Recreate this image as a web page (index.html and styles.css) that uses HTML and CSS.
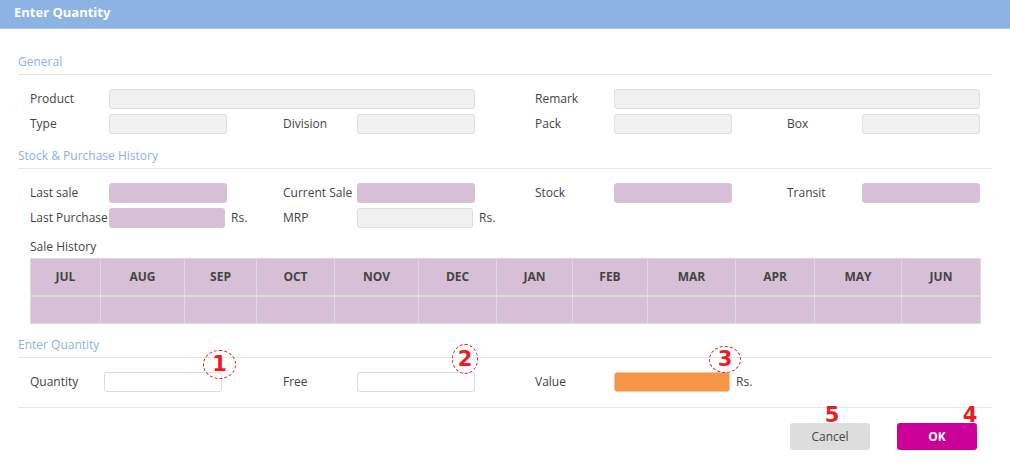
FILE: index.html
```html
<!DOCTYPE html>
<html>
<head>
<meta charset="utf-8">
<link rel="stylesheet" href="styles.css">
</head>
<body>
<div class="dialog">
  <div class="header">Enter Quantity</div>
  <div class="content">
    <div class="section-title first">General</div>
    <div class="form-grid">
      <span class="lbl">Product</span>
      <span class="inp gray span4"></span>
      <span class="lbl col-c">Remark</span>
      <span class="inp gray span4"></span>

      <span class="lbl">Type</span>
      <span class="inp gray"></span>
      <span class="lbl col-b">Division</span>
      <span class="inp gray"></span>
      <span class="lbl col-c">Pack</span>
      <span class="inp gray"></span>
      <span class="lbl col-d">Box</span>
      <span class="inp gray"></span>
    </div>

    <div class="section-title">Stock &amp; Purchase History</div>
    <div class="form-grid">
      <span class="lbl">Last sale</span>
      <span class="inp purple"></span>
      <span class="lbl col-b">Current Sale</span>
      <span class="inp purple"></span>
      <span class="lbl col-c">Stock</span>
      <span class="inp purple"></span>
      <span class="lbl col-d">Transit</span>
      <span class="inp purple"></span>

      <span class="lbl">Last Purchase</span>
      <span class="with-unit"><span class="inp purple short"></span><span class="unit">Rs.</span></span>
      <span class="lbl col-b">MRP</span>
      <span class="with-unit"><span class="inp gray short"></span><span class="unit">Rs.</span></span>
    </div>

    <div class="sub-label">Sale History</div>
    <table class="history">
      <thead>
        <tr><th>JUL</th><th>AUG</th><th>SEP</th><th>OCT</th><th>NOV</th><th>DEC</th><th>JAN</th><th>FEB</th><th>MAR</th><th>APR</th><th>MAY</th><th>JUN</th></tr>
      </thead>
      <tbody>
        <tr><td></td><td></td><td></td><td></td><td></td><td></td><td></td><td></td><td></td><td></td><td></td><td></td></tr>
      </tbody>
    </table>

    <div class="section-title">Enter Quantity</div>
    <div class="form-grid qty-grid">
      <span class="lbl">Quantity</span>
      <span class="inp white"></span>
      <span class="lbl col-b">Free</span>
      <span class="inp white"></span>
      <span class="lbl col-c">Value</span>
      <span class="with-unit"><span class="inp orange short"></span><span class="unit">Rs.</span></span>
    </div>

    <div class="actions">
      <button class="btn cancel">Cancel</button>
      <button class="btn ok">OK</button>
    </div>
  </div>

  <span class="mark ring m1">1</span>
  <span class="mark ring m2">2</span>
  <span class="mark ring m3">3</span>
  <span class="mark m5">5</span>
  <span class="mark m4">4</span>
</div>
</body>
</html>
```

FILE: styles.css
```css
* { box-sizing: border-box; }
html, body {
  margin: 0;
  padding: 0;
  background: #ffffff;
}
body {
  font-family: "Open Sans", "DejaVu Sans", sans-serif;
  font-size: 12px;
  color: #444444;
}
.dialog {
  position: relative;
  width: 1010px;
  height: 466px;
  background: #ffffff;
}
.header {
  height: 29px;
  background: #8db3e5;
  color: #ffffff;
  font-weight: 700;
  font-size: 13px;
  line-height: 25px;
  padding-left: 14px;
  border-bottom: 1px solid #a9c6ec;
}
.content {
  padding: 0 18px;
}
.section-title {
  color: #8db3e2;
  font-size: 12px;
  line-height: 16px;
  padding-bottom: 4px;
  border-bottom: 1px solid #e6e6e6;
  margin-top: 14px;
}
.section-title.first {
  margin-top: 25px;
}
.form-grid {
  display: grid;
  grid-template-columns: 79px 118px 56px 74px 118px 60px 79px 118px 55px 75px 118px;
  grid-auto-rows: 20px;
  row-gap: 5px;
  margin-top: 14px;
  padding-left: 12px;
}
.qty-grid {
  grid-template-columns: 74px 118px 61px 74px 118px 60px 79px 160px;
  padding-bottom: 15px;
  border-bottom: 1px solid #e6e6e6;
}
.lbl {
  align-self: center;
  line-height: 16px;
  white-space: nowrap;
  color: #444444;
}
.col-b { grid-column-start: 4; }
.col-c { grid-column-start: 7; }
.col-d { grid-column-start: 10; }
.span4 { grid-column-end: span 4; }
.inp {
  display: block;
  height: 20px;
  border: 1px solid #dedede;
  border-radius: 3px;
}
.gray { background: #f0f0f0; }
.purple { background: #d8bfd8; border-color: #d4c3d4; }
.white { background: #ffffff; border-color: #dcdcdc; }
.orange { background: #f79646; border-color: #e8c8a8; }
.short { width: 116px; flex: 0 0 116px; }
.with-unit {
  display: flex;
  align-items: center;
  gap: 6px;
  white-space: nowrap;
}
.unit {
  line-height: 16px;
  color: #444444;
  flex: 0 0 auto;
}
.sub-label {
  margin-top: 11px;
  padding-left: 12px;
  line-height: 16px;
}
.history {
  margin: 3px 0 0 12px;
  width: 950px;
  border-collapse: collapse;
  table-layout: fixed;
  background: #d8bfd8;
}
.history th, .history td {
  border: 1px solid #dcdcdc;
  padding: 0;
}
.history th {
  height: 37px;
  font-weight: 700;
  font-size: 12px;
  color: #444444;
  text-align: center;
  border-bottom-width: 2px;
}
.history td { height: 28px; }
.history th:nth-child(1) { width: 70px; }
.history th:nth-child(2) { width: 84px; }
.history th:nth-child(3) { width: 72px; }
.history th:nth-child(4) { width: 78px; }
.history th:nth-child(5) { width: 84px; }
.history th:nth-child(6) { width: 78px; }
.history th:nth-child(7) { width: 76px; }
.history th:nth-child(8) { width: 75px; }
.history th:nth-child(9) { width: 88px; }
.history th:nth-child(10) { width: 79px; }
.history th:nth-child(11) { width: 87px; }
.history th:nth-child(12) { width: 79px; }
.history + .section-title { margin-top: 13px; }
.actions {
  display: flex;
  justify-content: flex-end;
  gap: 27px;
  margin-top: 15px;
  padding-right: 15px;
}
.btn {
  width: 80px;
  height: 27px;
  border: none;
  border-radius: 3px;
  font-family: "Open Sans", "DejaVu Sans", sans-serif;
  font-size: 12px;
  padding: 0;
}
.cancel { background: #dddddd; color: #444444; }
.ok { background: #cc0099; color: #ffffff; font-weight: 700; }
.mark {
  position: absolute;
  color: #ec1c24;
  font-family: "DejaVu Sans", "Liberation Sans", sans-serif;
  font-weight: 700;
  font-size: 21px;
  line-height: 21px;
  display: flex;
  align-items: center;
  justify-content: center;
}
.ring {
  border: 1px dashed #e8141e;
  border-radius: 50%;
}
.m1 { left: 203px; top: 350px; width: 33px; height: 29px; }
.m2 { left: 452px; top: 344px; width: 26px; height: 30px; }
.m3 { left: 709px; top: 346px; width: 32px; height: 27px; }
.m5 { left: 823px; top: 405px; width: 18px; height: 21px; }
.m4 { left: 961px; top: 405px; width: 18px; height: 21px; }
```
